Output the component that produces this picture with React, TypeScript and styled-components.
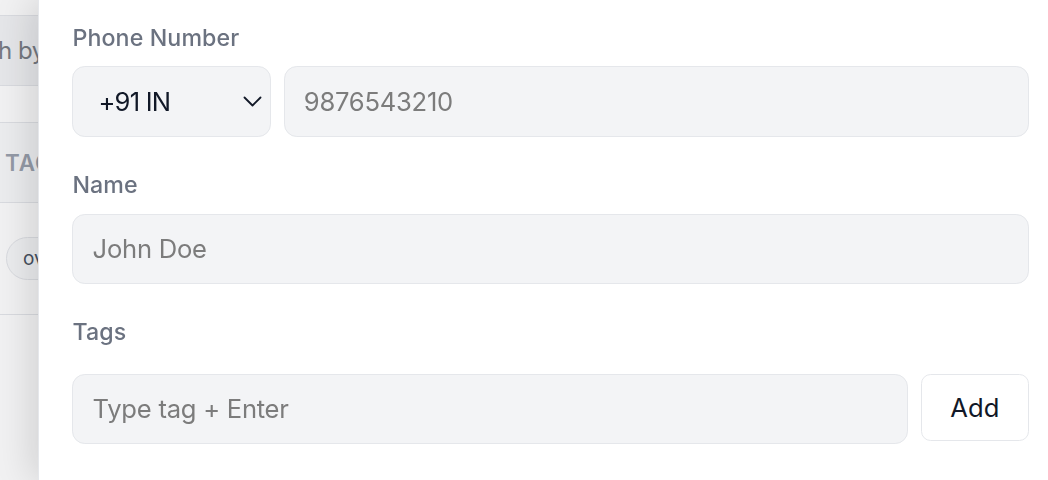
import styled, { createGlobalStyle } from "styled-components";

const GlobalStyle = createGlobalStyle`
  html, body {
    margin: 0;
    padding: 0;
    background: #ffffff;
    overflow: hidden;
  }
  body {
    font-family: Inter, "Noto Sans", sans-serif;
    color: #111827;
  }
  * {
    box-sizing: border-box;
  }
`;

const ChevronDown = () => (
  <svg width="19" height="11" viewBox="0 0 19 11" fill="none">
    <path
      d="M1.5 1.5 L9.5 9.5 L17.5 1.5"
      stroke="#111827"
      strokeWidth="1.8"
      strokeLinecap="round"
      strokeLinejoin="round"
    />
  </svg>
);

export default function App() {
  return (
    <>
      <GlobalStyle />
      <BackgroundPage>
        <SearchBox placeholder="Search by name or phone" readOnly />
        <ContactsTable>
          <TableHead>
            <HeadCell>Tags</HeadCell>
          </TableHead>
          <TableRow>
            <TagChip>overdue</TagChip>
          </TableRow>
        </ContactsTable>
      </BackgroundPage>
      <Overlay />
      <Drawer>
        <Field>
          <FieldLabel>Phone Number</FieldLabel>
          <PhoneRow>
            <CountrySelect>
              <span>+91 IN</span>
              <ChevronDown />
            </CountrySelect>
            <TextInput placeholder="9876543210" readOnly />
          </PhoneRow>
        </Field>
        <Field>
          <FieldLabel>Name</FieldLabel>
          <TextInput placeholder="John Doe" readOnly />
        </Field>
        <Field>
          <FieldLabel $gap={25.6}>Tags</FieldLabel>
          <TagRow>
            <TextInput placeholder="Type tag + Enter" readOnly />
            <AddButton type="button">Add</AddButton>
          </TagRow>
        </Field>
      </Drawer>
    </>
  );
}

const BackgroundPage = styled.div`
  display: flex;
  flex-direction: column;
  padding-top: 15px;
  width: 100vw;
  height: 100vh;
`;

const SearchBox = styled.input`
  margin-left: -86px;
  width: 600px;
  height: 71px;
  padding: 0 20px;
  border: 1.6px solid #e5e7eb;
  border-radius: 12.8px;
  background: #f3f4f6;
  font-family: Inter, sans-serif;
  font-size: 24px;
  letter-spacing: -0.02em;
  outline: none;

  &::placeholder {
    color: #7b7f86;
  }
`;

const ContactsTable = styled.div`
  margin-top: 36px;
  border-top: 1.6px solid #e5e7eb;
`;

const TableHead = styled.div`
  display: flex;
  align-items: center;
  height: 80px;
  padding-left: 5px;
  background: #f9fafb;
  border-bottom: 1.6px solid #e5e7eb;
`;

const HeadCell = styled.div`
  font-size: 22.4px;
  font-weight: 600;
  text-transform: uppercase;
  letter-spacing: 0.04em;
  color: #9ca3af;
`;

const TableRow = styled.div`
  display: flex;
  align-items: center;
  height: 112px;
  padding-left: 6px;
  border-bottom: 1.6px solid #e5e7eb;
`;

const TagChip = styled.span`
  display: inline-flex;
  align-items: center;
  height: 43px;
  padding: 0 16px;
  border: 1.6px solid #e5e7eb;
  border-radius: 999px;
  background: #f9fafb;
  font-size: 19px;
  color: #4b5563;
`;

const Overlay = styled.div`
  position: fixed;
  inset: 0;
  background: rgba(17, 24, 39, 0.06);
`;

const Drawer = styled.aside`
  position: fixed;
  top: 0;
  right: 0;
  bottom: 0;
  left: 38.4px;
  display: flex;
  flex-direction: column;
  gap: 32px;
  padding: 21.7px 19.2px 0 33px;
  background: #ffffff;
  border-left: 1.6px solid #e5e7eb;
  box-shadow: -6px 0 36px rgba(0, 0, 0, 0.14);
`;

const Field = styled.div`
  display: flex;
  flex-direction: column;
`;

const FieldLabel = styled.label<{ $gap?: number }>`
  margin-bottom: ${({ $gap }) => $gap ?? 12.8}px;
  font-size: 23.2px;
  line-height: 32px;
  font-weight: 500;
  letter-spacing: 0.005em;
  color: #6b7280;
`;

const PhoneRow = styled.div`
  display: flex;
  gap: 12.8px;
`;

const CountrySelect = styled.div`
  display: flex;
  align-items: center;
  justify-content: space-between;
  flex: 0 0 198.4px;
  height: 70.4px;
  padding: 0 8px 0 25px;
  border: 1.6px solid #e5e7eb;
  border-radius: 12.8px;
  background: #f3f4f6;
  font-size: 25.6px;
  letter-spacing: -0.03em;
  color: #111827;
`;

const TextInput = styled.input`
  flex: 1 1 auto;
  min-width: 0;
  width: 100%;
  height: 70.4px;
  padding: 0 19.2px;
  border: 1.6px solid #e5e7eb;
  border-radius: 12.8px;
  background: #f3f4f6;
  font-family: Inter, sans-serif;
  font-size: 25.6px;
  letter-spacing: -0.01em;
  color: #111827;
  outline: none;

  &::placeholder {
    color: #7c7c7c;
  }
`;

const TagRow = styled.div`
  display: flex;
  align-items: flex-start;
  gap: 12.8px;
`;

const AddButton = styled.button`
  flex: 0 0 108px;
  height: 67.2px;
  border: 1.6px solid #e5e7eb;
  border-radius: 9.6px;
  background: #ffffff;
  font-family: Inter, sans-serif;
  font-size: 25.6px;
  font-weight: 400;
  color: #111827;
  cursor: pointer;
`;
